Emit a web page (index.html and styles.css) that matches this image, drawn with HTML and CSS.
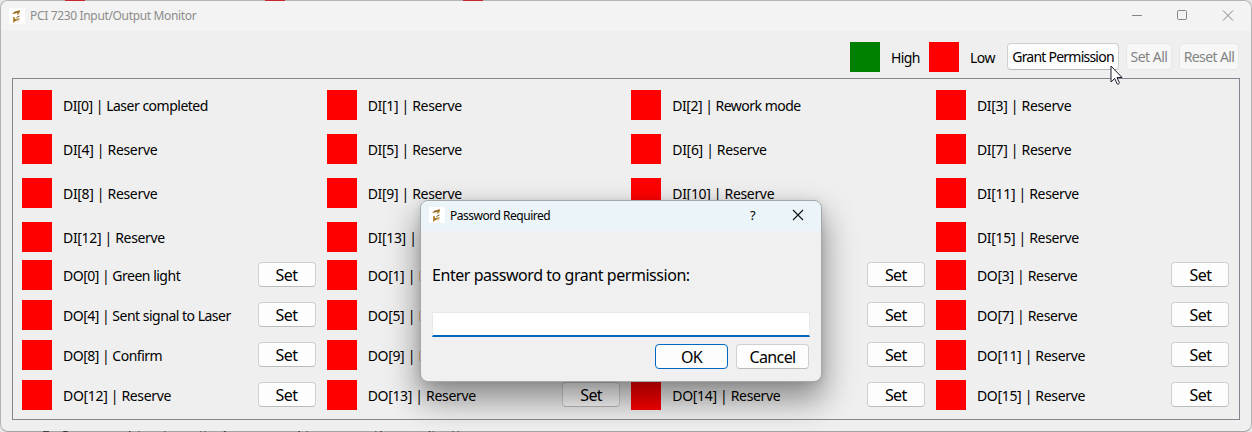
FILE: index.html
```
<!DOCTYPE html>
<html lang="en">
<head>
<meta charset="utf-8">
<title>PCI 7230 Input/Output Monitor</title>
<link rel="stylesheet" href="styles.css">
</head>
<body>
<main class="window">
  <header class="titlebar">
    <svg class="app-icon" viewBox="0 0 16 16"><rect width="16" height="16" fill="#fff"/><path d="M3 6l2-2 6-2v2l-1 2-2 1V5L5 6z" fill="#bd9140"/><path d="M4 9h2v2l5-1-1 2-3 1-3 2z" fill="#bd9140"/><path d="M5 4.5l5-1M7.5 9.5l3-1.5M5 12l2 0" stroke="#6a5630" fill="none"/><path d="M8 14l3-2" stroke="#ddd"/></svg>
    <span class="title">PCI 7230 Input/Output Monitor</span>
    <svg class="controls" viewBox="0 0 110 16"><path d="M3 7.5h10" fill="none" stroke="#858585"/><rect x="48.5" y="2.5" width="9" height="9" rx="1" fill="none" stroke="#858585"/><path d="M94 2.5l10 10M104 2.5l-10 10" fill="none" stroke="#858585"/></svg>
  </header>
  <section class="toolbar">
    <i class="led green"></i><span class="label high">High</span>
    <i class="led"></i><span class="label low">Low</span>
    <button class="btn grant">Grant Permission</button>
    <button class="btn set-all" disabled>Set All</button>
    <button class="btn reset-all" disabled>Reset All</button>
  </section>
  <section class="panel" id="panel"></section>
</main>
<div class="edge top"><i class="mark m1"></i><i class="mark m2"></i><i class="mark m3"></i></div>
<div class="edge bottom"><i class="bullet"></i><span class="under">Scan machine to write 1 password to secure the application.</span></div>
<section class="dialog">
  <header class="dialog-bar">
    <svg class="app-icon" viewBox="0 0 16 16"><rect width="16" height="16" fill="#fff"/><path d="M3 6l2-2 6-2v2l-1 2-2 1V5L5 6z" fill="#bd9140"/><path d="M4 9h2v2l5-1-1 2-3 1-3 2z" fill="#bd9140"/><path d="M5 4.5l5-1M7.5 9.5l3-1.5M5 12l2 0" stroke="#6a5630" fill="none"/><path d="M8 14l3-2" stroke="#ddd"/></svg>
    <span class="dialog-title">Password Required</span>
    <span class="help">?</span>
    <svg class="close" viewBox="0 0 12 12"><path d="M1 1l10 10M11 1L1 11" stroke="#111" stroke-width="1.1"/></svg>
  </header>
  <div class="dialog-body">
    <label class="prompt" for="pw">Enter password to grant permission:</label>
    <input class="field" id="pw" type="password">
    <div class="actions"><button class="btn ok">OK</button><button class="btn cancel">Cancel</button></div>
  </div>
</section>
<svg class="cursor" viewBox="0 0 13 20"><path d="M1 1v16l3.7-3.5 2.4 5.3c1 .8 2.5.1 2.2-1.1L7 12.5h5z" fill="#fff" stroke="#1b1b2b" stroke-linejoin="round"/></svg>
<script src="app.js"></script>
</body>
</html>
```
FILE: styles.css
```
* { box-sizing: border-box; }
body { margin: 0; width: 1252px; height: 432px; overflow: hidden; background: #e6e6e6; font-family: "Noto Sans", sans-serif; font-size: 14px; color: #000; }
.edge { position: absolute; left: 0; width: 1252px; height: 1px; overflow: hidden; }
.top { top: 0; }
.bottom { top: 431px; }
.mark { position: absolute; top: 0; width: 20px; height: 1px; background: #c8262c; }
.m1 { left: 65px; } .m2 { left: 265px; } .m3 { left: 463px; }
.bullet { position: absolute; left: 43px; top: 0; width: 6px; height: 1px; background: #444; }
.under { position: absolute; left: 61px; top: -6px; font-size: 15px; line-height: 20px; white-space: nowrap; color: #333; }
.window { position: relative; width: 1252px; height: 432px; border: 1px solid #b4b4b4; border-bottom-color: #a5a5a5; border-radius: 8px; background: #efefef; overflow: hidden; padding: 0 11px; }
.titlebar { height: 30px; margin: 0 -11px; padding: 0 12px 0 8px; display: flex; align-items: center; background: #f3f3f3; color: #8c8c8c; }
.app-icon { width: 16px; height: 16px; flex: none; }
.title { margin-left: 5px; font-size: 12px; line-height: 16px; letter-spacing: -.34px; }
.controls { width: 110px; height: 16px; margin-left: auto; }
.toolbar { height: 47px; padding-top: 11px; display: flex; justify-content: flex-end; align-items: flex-start; }
.led { display: block; width: 30px; height: 30px; background: #f00; flex: none; }
.green { background: #008000; }
.label { line-height: 20px; letter-spacing: -.5px; white-space: nowrap; padding-top: 6px; }
.reserve { letter-spacing: -.33px; }
.high { width: 49px; padding-left: 11px; letter-spacing: -.65px; }
.low { width: 48px; padding-left: 11px; }
.btn { height: 25px; padding: 0; border: 1px solid #d0d0d0; border-bottom-color: #bbb; border-radius: 4px; background: #fdfdfd; font: 16px/20px "Noto Sans", sans-serif; letter-spacing: -.6px; color: #000; white-space: nowrap; }
.toolbar .btn { height: 27px; margin-top: 1px; font-size: 14px; letter-spacing: -.5px; }
.toolbar .grant { width: 112px; letter-spacing: -.77px; }
.toolbar .set-all { width: 46px; margin-left: 7px; }
.toolbar .reset-all { width: 60px; margin: 1px 1px 0 7px; letter-spacing: -.6px; }
.btn:disabled { color: #838383; background: #f7f7f7; border-color: #e7e7e7; }
.panel { height: 342px; border: 1px solid #828790; padding: 11px 9px; display: grid; grid-template-columns: repeat(4, 293.5px); column-gap: 11.17px; grid-template-rows: 44px 44px 44px 38px repeat(4, 40px); }
.channel { display: flex; align-items: flex-start; height: 30px; }
.channel .label { margin-left: 11px; }
.channel .btn { width: 58px; margin: 2px 0 0 auto; }
.dialog { position: absolute; left: 420px; top: 200px; width: 402px; height: 182px; border: 1px solid #a5a8a9; border-radius: 8px; background: #f0f0f0; box-shadow: 0 16px 32px 2px rgba(0,0,0,.42), 0 1px 8px rgba(0,0,0,.1); }
.dialog-bar { height: 30px; display: flex; align-items: center; padding: 0 17px 2px 8px; background: #ebf4f8; border-radius: 7px 7px 0 0; }
.dialog-title { margin-left: 5px; font-size: 12px; letter-spacing: -.48px; }
.help { margin-left: auto; width: 9px; font-size: 13px; }
.close { width: 12px; height: 12px; margin-left: 33px; }
.dialog-body { padding: 33px 11px 0; display: flex; flex-direction: column; }
.prompt { font-size: 16px; line-height: 22px; letter-spacing: -.45px; white-space: nowrap; }
.field { margin-top: 26px; width: 378px; height: 25px; border: 1px solid #e8e8e8; border-bottom: 2px solid #0067c0; background: #fff; padding: 0 4px; outline: none; }
.actions { display: flex; justify-content: flex-end; gap: 8px; margin-top: 7px; padding-right: 1px; }
.actions .btn { width: 73px; }
.actions .ok { border-color: #0067c0; }
.cursor { position: absolute; left: 1110px; top: 65px; width: 13px; height: 20px; }
```
FILE: app.js
```
const inputs = Array(16).fill("Reserve");
inputs[0] = "Laser completed";
inputs[2] = "Rework mode";
const outputs = Array(16).fill("Reserve");
outputs[0] = "Green light";
outputs[4] = "Sent signal to Laser";
outputs[8] = "Confirm";
const row = (kind, name, i) =>
  `<div class="channel"><i class="led"></i><span class="label ${name === "Reserve" ? "reserve" : ""}">${kind}[${i}] | ${name}</span>${kind === "DO" ? '<button class="btn">Set</button>' : ""}</div>`;
document.getElementById("panel").innerHTML =
  inputs.map((n, i) => row("DI", n, i)).join("") + outputs.map((n, i) => row("DO", n, i)).join("");
```
